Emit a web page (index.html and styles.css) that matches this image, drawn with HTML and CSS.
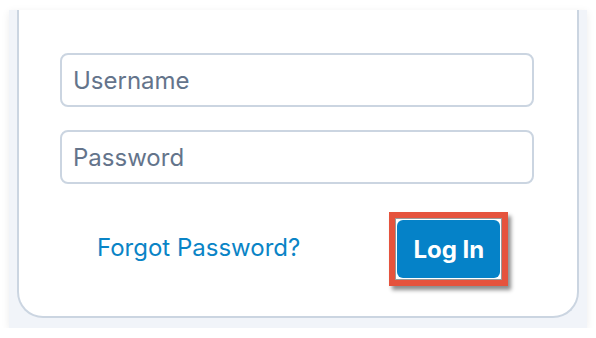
FILE: index.html
```html
<!DOCTYPE html>
<html lang="en">
<head>
    <meta charset="UTF-8">
    <meta name="viewport" content="width=device-width, initial-scale=1.0">
    <title>Login</title>
    <link rel="stylesheet" href="styles.css">
</head>
<body>
<div class="frame">
    <div class="card">
        <input class="field" type="text" placeholder="Username">
        <input class="field" type="password" placeholder="Password">
        <div class="actions">
            <a class="forgot" href="#">Forgot Password?</a>
            <div class="highlight">
                <button class="login-btn">Log In</button>
            </div>
        </div>
    </div>
</div>
</body>
</html>
```

FILE: styles.css
```css
*{
    box-sizing: border-box;
    font-family: Inter, 'Noto Sans', sans-serif;
}
body{
    margin: 0;
    background-color: #fff;
}

.frame{
    margin: 10px 0 0 9px;
    width: 578px;
    height: 318px;
    padding: 0 8px 10px 8px;
    background-color: #f1f4f9;
    box-shadow: 0 2px 8px rgba(0, 0, 0, .08);
    overflow: hidden;
}

.card{
    height: 308px;
    background-color: #fff;
    border: 2px solid #cbd5e1;
    border-top: none;
    border-radius: 0 0 26px 26px;
    padding: 43px 43px 0 41px;
    display: flex;
    flex-direction: column;
}

.field{
    height: 54px;
    width: 100%;
    border: 2px solid #cbd5e1;
    border-radius: 8px;
    padding: 0 11px;
    font-size: 24px;
    color: #334155;
    outline: none;
}
.field::placeholder{
    color: #64748b;
}
.field + .field{
    margin-top: 23px;
}

.actions{
    display: flex;
    align-items: center;
    margin-top: 28px;
    padding-left: 37px;
}

.forgot{
    color: #0a84c6;
    text-decoration: none;
    font-size: 24px;
    margin-top: -3px;
}

.highlight{
    margin-left: 89px;
    border: 6px solid #e5533d;
    padding: 2px;
    box-shadow: inset 0 0 0 1px #9a9a9a, 3px 4px 4px rgba(0, 0, 0, .45);
    background-color: #fff;
}

.login-btn{
    display: block;
    width: 103px;
    height: 58px;
    border: none;
    border-radius: 6px;
    background-color: #0582c8;
    color: #fff;
    font-size: 24px;
    font-weight: 700;
    cursor: pointer;
}
```
